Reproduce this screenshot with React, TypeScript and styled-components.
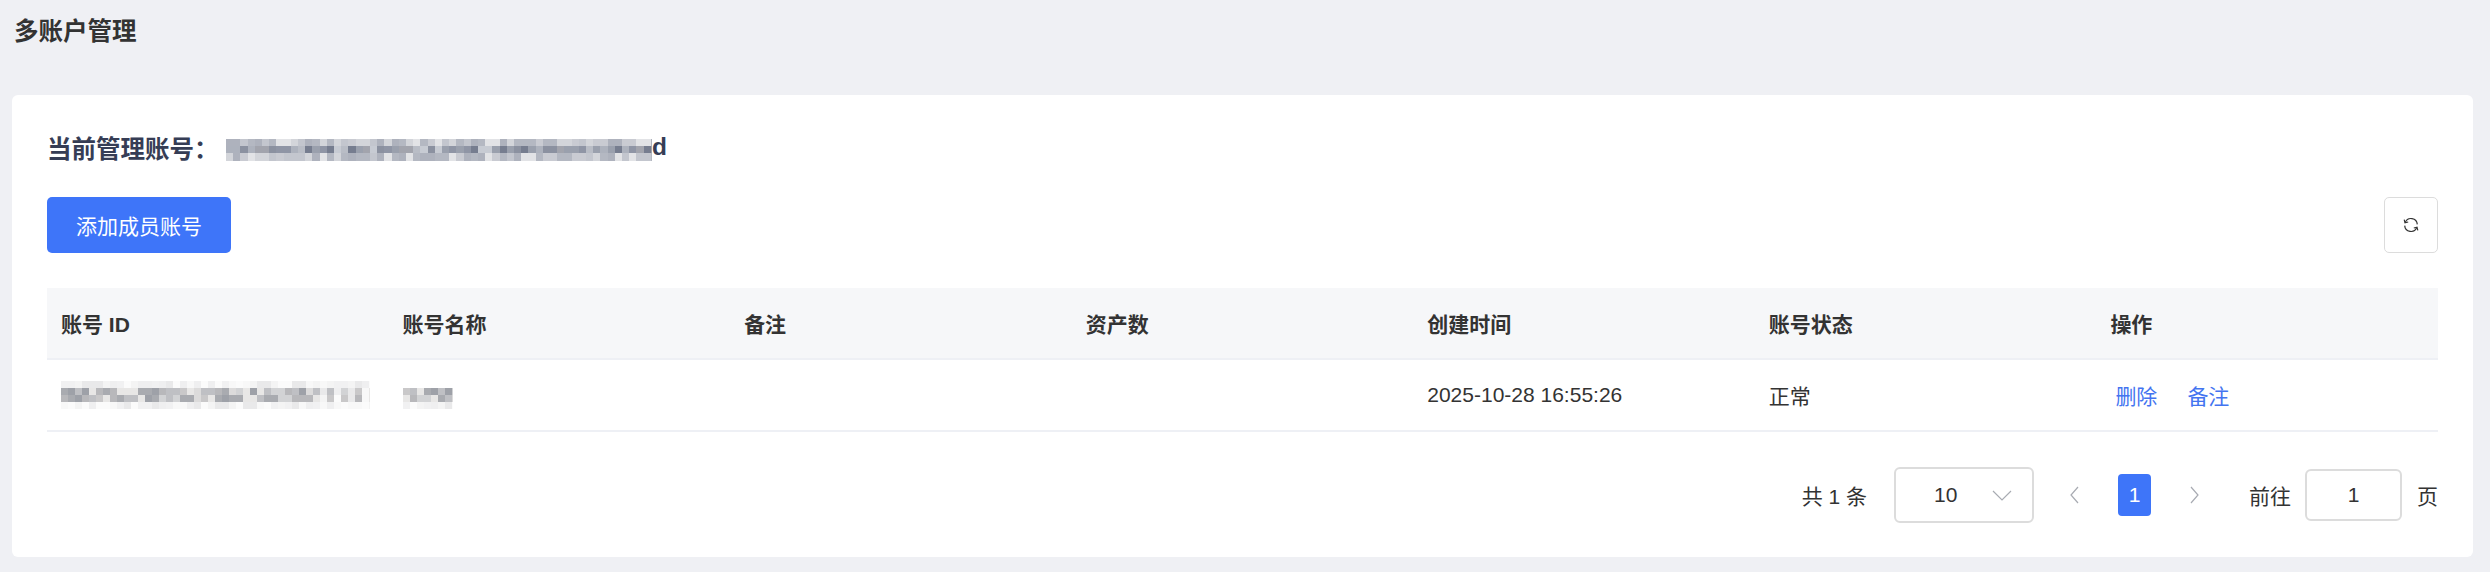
import React from 'react'
import styled, { createGlobalStyle } from 'styled-components'

const GlobalStyle = createGlobalStyle`
  * {
    box-sizing: border-box;
    margin: 0;
    padding: 0;
  }
  html, body {
    background: #eff0f4;
    font-family: "Liberation Sans", "Noto Sans CJK SC", sans-serif;
    color: #333;
  }
`

const Page = styled.div`
  width: 2490px;
  height: 572px;
  padding: 19px 17px 15px 12px;
  overflow: hidden;
`

const Title = styled.h1`
  font-size: 24.5px;
  line-height: 26px;
  font-weight: 700;
  color: #333;
  padding-left: 2px;
  margin-bottom: 50px;
`

const Card = styled.div`
  height: 462px;
  background: #fff;
  border-radius: 6px;
  padding: 36px 35px 0;
`

const AccountLine = styled.div`
  display: flex;
  align-items: center;
  height: 32px;
  font-size: 24.5px;
  font-weight: 700;
  color: #363d55;
  margin-bottom: 34px;
`

const AccountLabel = styled.span`
  width: 179px;
`

const MosaicSlot = styled.div<{ $shift: number }>`
  margin-top: ${props => props.$shift}px;
`

const Toolbar = styled.div`
  display: flex;
  justify-content: space-between;
  margin-bottom: 35px;
`

const PrimaryButton = styled.button`
  width: 184px;
  height: 56px;
  border: none;
  border-radius: 5px;
  background: #3e75f9;
  color: #fff;
  font: inherit;
  font-size: 21px;
`

const IconButton = styled.button`
  display: flex;
  align-items: center;
  justify-content: center;
  width: 54px;
  height: 56px;
  border: 1px solid #dcdcdc;
  border-radius: 5px;
  background: #fff;
  color: #333;
`

const Table = styled.table`
  width: 100%;
  table-layout: fixed;
  border-collapse: collapse;
  font-size: 21px;
`

const HeadCell = styled.th`
  height: 71px;
  padding: 0 14px;
  background: #f6f7f9;
  border-bottom: 2px solid #eef0f5;
  text-align: left;
  font-weight: 700;
  color: #333;
`

const BodyCell = styled.td`
  height: 72px;
  padding: 0 14px;
  border-bottom: 2px solid #eef0f5;
  color: #333;
`

const ActionLink = styled.a<{ $first?: boolean }>`
  color: #4374f0;
  margin-left: ${props => (props.$first ? '5px' : '30px')};
`

const Pagination = styled.div`
  display: flex;
  justify-content: flex-end;
  align-items: center;
  height: 56px;
  margin-top: 35px;
  font-size: 21px;
  color: #333;
`

const Total = styled.span`
  margin-right: 27px;
`

const PageSelect = styled.div`
  display: flex;
  align-items: center;
  justify-content: space-between;
  width: 140px;
  height: 56px;
  padding: 0 20px 0 38px;
  border: 2px solid #dcdcdc;
  border-radius: 6px;
  margin-right: 35px;
`

const PagerArrow = styled.span`
  display: flex;
  justify-content: center;
  width: 12px;
  color: #a8abb2;
`

const PagerNumber = styled.span`
  display: flex;
  align-items: center;
  justify-content: center;
  width: 33px;
  height: 42px;
  margin: 0 37px;
  border-radius: 4px;
  background: #3e75f9;
  color: #fff;
`

const JumpLabel = styled.span`
  margin-left: 49px;
`

const JumpInput = styled.div`
  display: flex;
  align-items: center;
  justify-content: center;
  width: 97px;
  height: 52px;
  margin: 0 15px 0 14px;
  border: 2px solid #dcdcdc;
  border-radius: 6px;
`

type Tone = 'dark' | 'pale' | 'light' | 'fade'

const palettes: Record<Tone, string[]> = {
  dark: ['#9aa0ad', '#8b91a0', '#adb2bd', '#767d8f', '#b9bdc6', '#a2a4ad', '#c7cbd3', '#8f95a5'],
  pale: ['#c3c6ce', '#d3d5da', '#b4b8c2', '#e2e3e6', '#c9cbd2', '#aeb2bd'],
  light: ['#c9c8c9', '#b8b8bb', '#dcdbdb', '#a9abb0', '#e8e7e6', '#bfc0c4', '#d2d3d5', '#9ea1a8'],
  fade: ['#f4f4f4', '#efeff0', '#f8f8f8', '#e9e9ea', '#fbfbfb', '#f1f1f2'],
}

// blurred-out ids in the screenshot, drawn as a mosaic
function Mosaic({ width, rows, seed, cell = 7, tailFrom }: {
  width: number
  rows: Tone[]
  seed: number
  cell?: number
  tailFrom?: number
}) {
  let state = seed
  const next = () => {
    state = (state * 9301 + 49297) % 233280
    return state / 233280
  }
  const cols = Math.ceil(width / cell)
  const rects = []
  for (let r = 0; r < rows.length; r++) {
    for (let c = 0; c < cols; c++) {
      const list = palettes[tailFrom !== undefined && c >= tailFrom && rows[r] === 'light' && c % 2 ? 'fade' : rows[r]]
      rects.push(<rect key={r + '-' + c} x={c * cell} y={r * cell} width={cell} height={cell} fill={list[Math.floor(next() * list.length)]} />)
    }
  }
  const height = rows.length * cell
  return <svg width={width} height={height} viewBox={`0 0 ${width} ${height}`} shapeRendering="crispEdges" style={{ display: 'block' }}>{rects}</svg>
}

const Refresh = () => (
  <svg width="16" height="16" viewBox="0 0 16 16" fill="none" stroke="currentColor" strokeWidth="1.2">
    <path d="M2.2 5.4A6.3 6.3 0 0 1 14.3 7.4" />
    <path d="M13.8 10.6A6.3 6.3 0 0 1 1.7 8.6" />
    <path d="M1.2 2.6 2 5.8 5.2 5" />
    <path d="M14.8 13.4 14 10.2 10.8 11" />
  </svg>
)

const Chevron = ({ dir }: { dir: 'left' | 'right' | 'down' }) => {
  const d = dir === 'left' ? 'M9 1 2 9l7 8' : dir === 'right' ? 'M3 1l7 8-7 8' : 'M1 1l9 9 9-9'
  return dir === 'down' ? (
    <svg width="20" height="11" viewBox="0 0 20 11" fill="none" stroke="#a8abb2" strokeWidth="1.2"><path d={d} /></svg>
  ) : (
    <svg width="12" height="18" viewBox="0 0 12 18" fill="none" stroke="#a8abb2" strokeWidth="1.2"><path d={d} /></svg>
  )
}

const columns = ['账号 ID', '账号名称', '备注', '资产数', '创建时间', '账号状态', '操作']

export default function App() {
  return (
    <Page>
      <GlobalStyle />
      <Title>多账户管理</Title>
      <Card>
        <AccountLine>
          <AccountLabel>当前管理账号：</AccountLabel>
          <MosaicSlot $shift={6}>
            <Mosaic width={426} rows={['pale', 'dark', 'pale']} cell={7.2} seed={17} />
          </MosaicSlot>
          <span>d</span>
        </AccountLine>
        <Toolbar>
          <PrimaryButton>添加成员账号</PrimaryButton>
          <IconButton aria-label="刷新"><Refresh /></IconButton>
        </Toolbar>
        <Table>
          <thead>
            <tr>
              {columns.map(name => <HeadCell key={name}>{name}</HeadCell>)}
            </tr>
          </thead>
          <tbody>
            <tr>
              <BodyCell><Mosaic width={309} rows={['fade', 'light', 'light', 'fade']} seed={41} tailFrom={37} /></BodyCell>
              <BodyCell>
                <MosaicSlot $shift={6}>
                  <Mosaic width={50} rows={['light', 'light', 'fade']} seed={73} />
                </MosaicSlot>
              </BodyCell>
              <BodyCell />
              <BodyCell />
              <BodyCell>2025-10-28 16:55:26</BodyCell>
              <BodyCell>正常</BodyCell>
              <BodyCell>
                <ActionLink $first>删除</ActionLink>
                <ActionLink>备注</ActionLink>
              </BodyCell>
            </tr>
          </tbody>
        </Table>
        <Pagination>
          <Total>共 1 条</Total>
          <PageSelect>
            <span>10</span>
            <Chevron dir="down" />
          </PageSelect>
          <PagerArrow><Chevron dir="left" /></PagerArrow>
          <PagerNumber>1</PagerNumber>
          <PagerArrow><Chevron dir="right" /></PagerArrow>
          <JumpLabel>前往</JumpLabel>
          <JumpInput>1</JumpInput>
          <span>页</span>
        </Pagination>
      </Card>
    </Page>
  )
}
